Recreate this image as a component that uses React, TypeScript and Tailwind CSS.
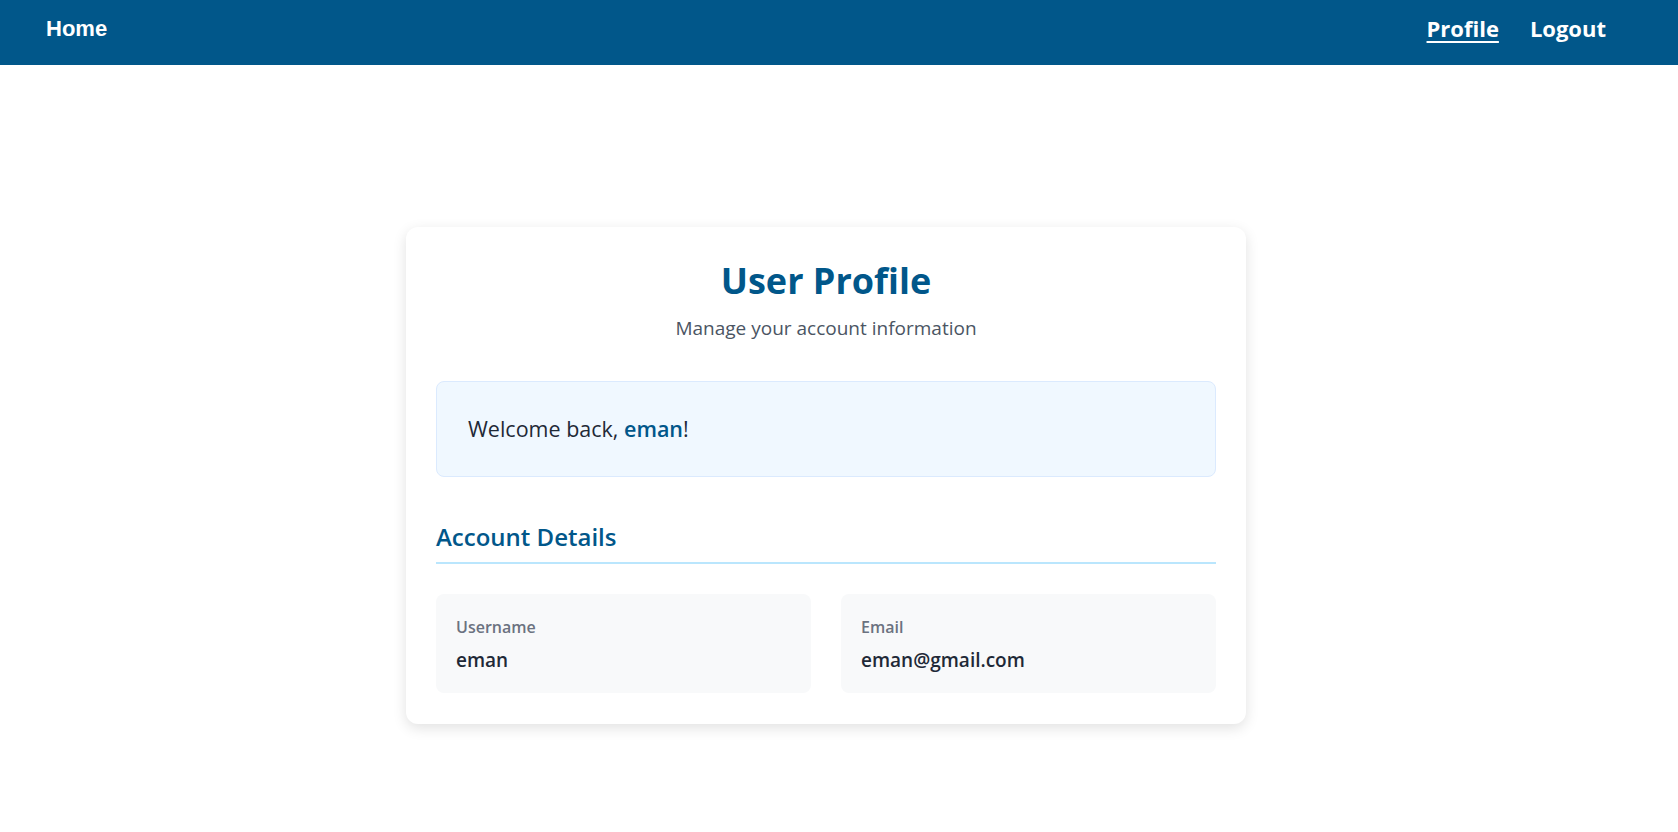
const fields = [
  { label: "Username", value: "eman" },
  { label: "Email", value: "eman@gmail.com" },
];

function NavBar() {
  return (
    <nav className="flex h-[65px] items-start justify-between bg-[#01578a] pl-[46px] pr-[72px] pt-[12px]">
      <a href="#" className="font-['Liberation_Sans'] text-[22px] font-bold text-white">
        Home
      </a>
      <div className="flex gap-[31px] text-[22px] font-bold text-white">
        <a href="#" className="underline underline-offset-[4px]">
          Profile
        </a>
        <a href="#">Logout</a>
      </div>
    </nav>
  );
}

export default function App() {
  return (
    <div className="min-h-screen bg-white font-['Segoe_UI','Open_Sans',sans-serif]">
      <NavBar />

      <main className="flex justify-center pr-[26px] pt-[162px]">
        <div className="w-[840px] rounded-xl bg-white px-[30px] pb-[31px] pt-[32px] shadow-[0_4px_14px_rgba(0,0,0,0.12)]">
          <div className="text-center">
            <h1 className="text-[36px] font-bold leading-[1.2] text-[#01578a]">User Profile</h1>
            <p className="mt-[12px] text-[19px] text-[#4b5563]">Manage your account information</p>
          </div>

          <div className="mt-[38px] flex h-[96px] items-center rounded-lg border border-[#dbeafe] bg-[#f0f8ff] px-[31px]">
            <p className="text-[21.5px] text-[#1f2937]">
              Welcome back, <span className="font-semibold text-[#01578a]">eman</span>!
            </p>
          </div>

          <h2 className="mt-[42px] border-b-2 border-[#bae6fd] pb-[7px] text-[24px] font-semibold text-[#01578a]">
            Account Details
          </h2>

          <div className="mt-[30px] grid grid-cols-2 gap-[30px]">
            {fields.map((f) => (
              <div key={f.label} className="h-[99px] rounded-lg bg-[#f8f9fa] px-[20px] pt-[21px]">
                <div className="text-[16px] font-semibold text-[#6b7280]">{f.label}</div>
                <div className="mt-[7px] text-[19px] font-semibold text-[#1f2937]">{f.value}</div>
              </div>
            ))}
          </div>
        </div>
      </main>
    </div>
  );
}
